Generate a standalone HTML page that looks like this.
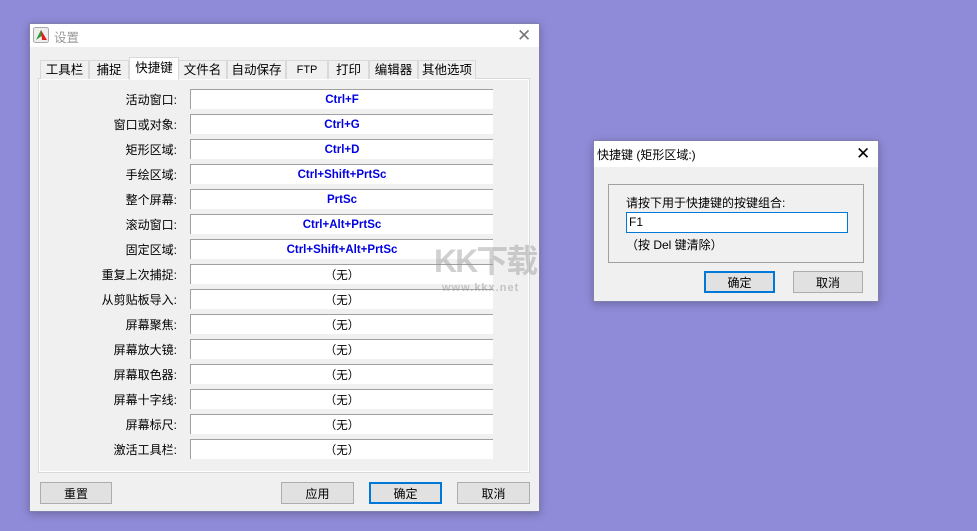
<!DOCTYPE html>
<html><head><meta charset="utf-8"><style>
*{box-sizing:border-box;margin:0;padding:0}
body{width:977px;height:531px;background:#8f8bd8;position:relative;overflow:hidden;font-family:"Liberation Sans","Noto Sans CJK SC",sans-serif;font-size:12px;color:#000}
.abs{position:absolute;white-space:nowrap}
.win{position:absolute;background:#f0f0f0;border:1px solid #7f7fb0;box-shadow:0 2px 8px rgba(0,0,0,.25)}
.tb{position:absolute;left:0;top:0;right:0;background:#fff}
.tab{position:absolute;top:36px;height:19px;border:1px solid #d9d9d9;border-bottom:none;background:#f0f0f0;text-align:center;line-height:18px;font-size:12.5px}
.lbl{position:absolute;width:138px;height:20px;display:flex;align-items:center;justify-content:flex-end;font-size:12px}
.fld{position:absolute;left:151px;width:303px;height:20px;background:#fff;border-top:1px solid #a0a0a0;border-left:1px solid #a0a0a0;display:flex;align-items:center;justify-content:center;font-size:11.5px}
.b{color:#0000e0;font-weight:bold}
.btn{position:absolute;height:22px;background:#e1e1e1;border:1px solid #adadad;display:flex;align-items:center;justify-content:center;font-size:12px}
.def{border:2px solid #0078d7}
</style></head><body>
<div class="win" style="left:29px;top:23px;width:511px;height:489px">
 <div class="tb" style="height:23px">
  <svg class="abs" style="left:3px;top:3px" width="16" height="16"><rect x="0.5" y="0.5" width="15" height="15" rx="2" fill="#eee" stroke="#aaa"/><path d="M3 13 L8 3 L10 8Z" fill="#2a9a2a"/><path d="M8 3 L14 13 L9 13Z" fill="#e02020"/></svg>
  <div class="abs" style="left:24px;top:3px;color:#999;font-size:12.5px">设置</div>
  <div class="abs" style="left:487px;top:2px;font-size:17px;color:#777">✕</div>
 </div>
 <div class="abs" style="left:8px;top:54px;width:492px;height:395px;background:#fff;border:1px solid #d9d9d9"></div>
 <div class="abs" style="left:10px;top:56px;width:488px;height:391px;background:#f0f0f0"></div>
 <div class="tab" style="left:10px;width:49px">工具栏</div>
 <div class="tab" style="left:59px;width:40px">捕捉</div>
 <div class="tab" style="left:148px;width:49px">文件名</div>
 <div class="tab" style="left:197px;width:59px">自动保存</div>
 <div class="tab" style="left:256px;width:42px;font-size:11px">FTP</div>
 <div class="tab" style="left:298px;width:41px">打印</div>
 <div class="tab" style="left:339px;width:49px">编辑器</div>
 <div class="tab" style="left:388px;width:58px">其他选项</div>
 <div class="tab" style="left:99px;width:50px;top:33px;height:23px;background:#fff;line-height:20px">快捷键</div>
 <div class="abs" style="left:9px;top:55px;width:490px;height:393px">
  <div class="abs" style="top:10px;left:0;width:490px">
   <div class="lbl" style="top:0">活动窗口:</div><div class="fld b" style="top:0">Ctrl+F</div>
   <div class="lbl" style="top:25px">窗口或对象:</div><div class="fld b" style="top:25px">Ctrl+G</div>
   <div class="lbl" style="top:50px">矩形区域:</div><div class="fld b" style="top:50px">Ctrl+D</div>
   <div class="lbl" style="top:75px">手绘区域:</div><div class="fld b" style="top:75px">Ctrl+Shift+PrtSc</div>
   <div class="lbl" style="top:100px">整个屏幕:</div><div class="fld b" style="top:100px">PrtSc</div>
   <div class="lbl" style="top:125px">滚动窗口:</div><div class="fld b" style="top:125px">Ctrl+Alt+PrtSc</div>
   <div class="lbl" style="top:150px">固定区域:</div><div class="fld b" style="top:150px">Ctrl+Shift+Alt+PrtSc</div>
   <div class="lbl" style="top:175px">重复上次捕捉:</div><div class="fld" style="top:175px">（无）</div>
   <div class="lbl" style="top:200px">从剪贴板导入:</div><div class="fld" style="top:200px">（无）</div>
   <div class="lbl" style="top:225px">屏幕聚焦:</div><div class="fld" style="top:225px">（无）</div>
   <div class="lbl" style="top:250px">屏幕放大镜:</div><div class="fld" style="top:250px">（无）</div>
   <div class="lbl" style="top:275px">屏幕取色器:</div><div class="fld" style="top:275px">（无）</div>
   <div class="lbl" style="top:300px">屏幕十字线:</div><div class="fld" style="top:300px">（无）</div>
   <div class="lbl" style="top:325px">屏幕标尺:</div><div class="fld" style="top:325px">（无）</div>
   <div class="lbl" style="top:350px">激活工具栏:</div><div class="fld" style="top:350px">（无）</div>
  </div>
 </div>
 <div class="abs" style="left:404px;top:212px;font-size:32px;font-weight:bold;color:rgba(150,150,150,.45);letter-spacing:-2px">KK下载</div>
 <div class="abs" style="left:412px;top:258px;font-size:11px;font-weight:bold;color:rgba(150,150,150,.5);letter-spacing:1px">www.kkx.net</div>
 <div class="btn" style="left:10px;top:458px;width:72px">重置</div>
 <div class="btn" style="left:251px;top:458px;width:73px">应用</div>
 <div class="btn def" style="left:339px;top:458px;width:73px">确定</div>
 <div class="btn" style="left:427px;top:458px;width:73px">取消</div>
</div>

<div class="win" style="left:593px;top:140px;width:286px;height:162px">
 <div class="tb" style="height:26px">
  <div class="abs" style="left:3px;top:5px;font-size:12px">快捷键 (矩形区域:)</div>
  <div class="abs" style="left:262px;top:3px;font-size:17px">✕</div>
 </div>
 <div class="abs" style="left:14px;top:43px;width:256px;height:79px;border:1px solid #a0a0a0"></div>
 <div class="abs" style="left:32px;top:53px">请按下用于快捷键的按键组合:</div>
 <div class="abs" style="left:32px;top:71px;width:222px;height:21px;background:#fff;border:1px solid #0078d7;padding-left:2px;line-height:19px">F1</div>
 <div class="abs" style="left:32px;top:95px">（按 Del 键清除）</div>
 <div class="btn def" style="left:110px;top:130px;width:71px">确定</div>
 <div class="btn" style="left:199px;top:130px;width:70px">取消</div>
</div>
</body></html>
